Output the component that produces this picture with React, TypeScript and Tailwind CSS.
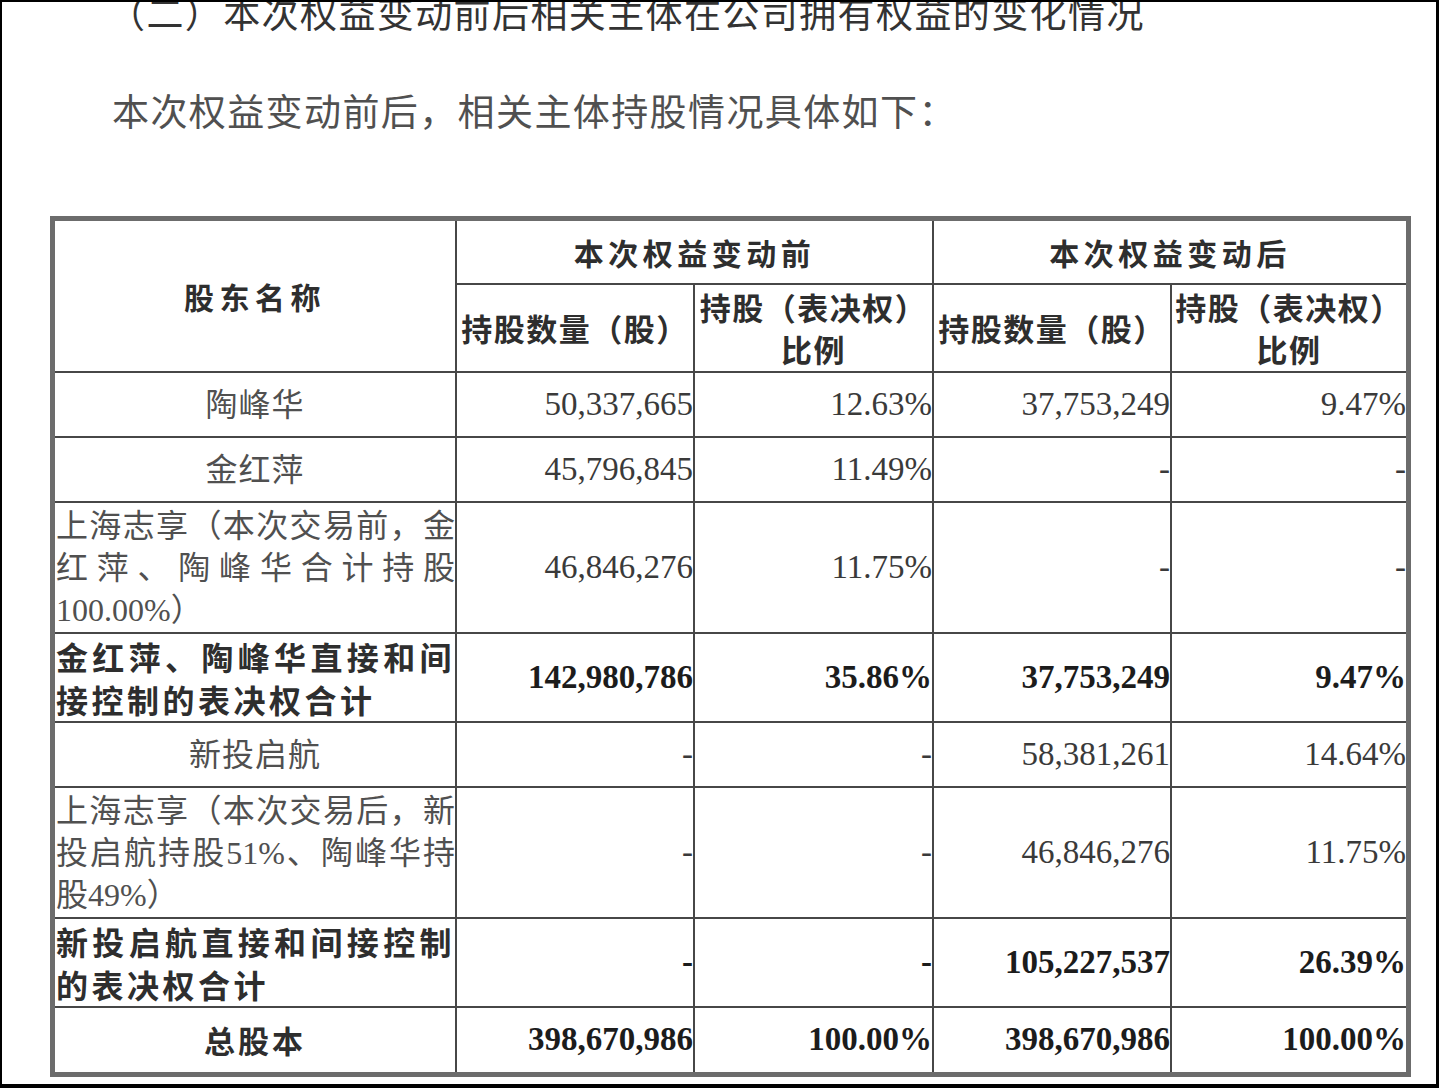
const rows = [
  { name: "陶峰华", kind: "name", v: ["50,337,665", "12.63%", "37,753,249", "9.47%"] },
  { name: "金红萍", kind: "name", v: ["45,796,845", "11.49%", "-", "-"] },
  { name: "上海志享（本次交易前，金红萍、陶峰华合计持股100.00%）", kind: "para", v: ["46,846,276", "11.75%", "-", "-"] },
  { name: "金红萍、陶峰华直接和间接控制的表决权合计", kind: "bold", v: ["142,980,786", "35.86%", "37,753,249", "9.47%"] },
  { name: "新投启航", kind: "name", v: ["-", "-", "58,381,261", "14.64%"] },
  { name: "上海志享（本次交易后，新投启航持股51%、陶峰华持股49%）", kind: "para", v: ["-", "-", "46,846,276", "11.75%"] },
  { name: "新投启航直接和间接控制的表决权合计", kind: "bold", v: ["-", "-", "105,227,537", "26.39%"] },
  { name: "总股本", kind: "total", v: ["398,670,986", "100.00%", "398,670,986", "100.00%"] },
];

const heiti = "font-[family-name:'Noto_Sans_CJK_SC',sans-serif] font-bold text-[#2e2e2e]";
const song = "font-[family-name:'Liberation_Serif','Noto_Sans_CJK_SC',serif] text-[#505050]";

function NameCell({ name, kind }: { name: string; kind: string }) {
  if (kind === "name") {
    return (
      <div className={`bg-white flex items-center justify-center text-[32px] tracking-[1px] ${song}`}>
        {name}
      </div>
    );
  }
  if (kind === "total") {
    return (
      <div className={`bg-white flex items-center justify-center text-[31px] tracking-[3px] ${heiti}`}>
        {name}
      </div>
    );
  }
  if (kind === "bold") {
    return (
      <div className={`bg-white flex items-center pl-[1px] text-[32px] leading-[43px] tracking-[3.5px] text-justify ${heiti}`}>
        <p className="w-full">{name}</p>
      </div>
    );
  }
  return (
    <div className={`bg-white flex items-center pl-[1px] text-[32px] leading-[42px] text-justify ${song}`}>
      <p className="w-full">{name}</p>
    </div>
  );
}

export default function App() {
  return (
    <div className="w-[1439px] h-[1088px] bg-white border-t-[2px] border-l-[2px] border-r-[3px] border-b-[4px] border-black overflow-hidden">
      <div className="-mt-[10px] pl-[106px] h-[40px] text-[37px] leading-[40px] tracking-[1.4px] font-[family-name:'Noto_Sans_CJK_SC',sans-serif] text-[#333]">
        （二）本次权益变动前后相关主体在公司拥有权益的变化情况
      </div>
      <div className={`mt-[62px] pl-[110px] h-[40px] text-[37px] leading-[40px] tracking-[1.4px] ${song}`}>
        本次权益变动前后，相关主体持股情况具体如下：
      </div>
      <div className="mt-[82px] ml-[48px] w-[1361px] grid grid-cols-[400px_236px_237px_236px_234px] grid-rows-[62px_86px_63px_63px_129px_87px_63px_129px_87px_64px] gap-[2px] bg-[#474747] border-[5px] border-[#6c6c6c]">
        <div className={`row-span-2 bg-white flex items-center justify-center text-[30px] tracking-[5.5px] ${heiti}`}>
          股东名称
        </div>
        <div className={`col-span-2 bg-white flex items-center justify-center text-[30px] tracking-[4.5px] ${heiti}`}>
          本次权益变动前
        </div>
        <div className={`col-span-2 bg-white flex items-center justify-center text-[30px] tracking-[4.5px] ${heiti}`}>
          本次权益变动后
        </div>
        {[0, 1].map((i) => (
          <div key={i} className="contents">
            <div className={`bg-white flex items-center justify-center text-[31px] tracking-[1.5px] whitespace-nowrap ${heiti}`}>
              持股数量（股）
            </div>
            <div className={`bg-white flex items-center justify-center text-center text-[31px] leading-[42px] tracking-[1.5px] whitespace-nowrap ${heiti}`}>
              <p>
                持股（表决权）
                <br />
                比例
              </p>
            </div>
          </div>
        ))}
        {rows.map((r) => (
          <div key={r.name} className="contents">
            <NameCell name={r.name} kind={r.kind} />
            {r.v.map((val, j) => (
              <div
                key={j}
                className={`bg-white flex items-center justify-end text-[33px] font-[family-name:'Liberation_Serif',serif] ${
                  r.kind === "bold" || r.kind === "total" ? "font-bold text-[#1c1c1c]" : "text-[#3a3a3a]"
                }`}
              >
                {val}
              </div>
            ))}
          </div>
        ))}
      </div>
    </div>
  );
}
